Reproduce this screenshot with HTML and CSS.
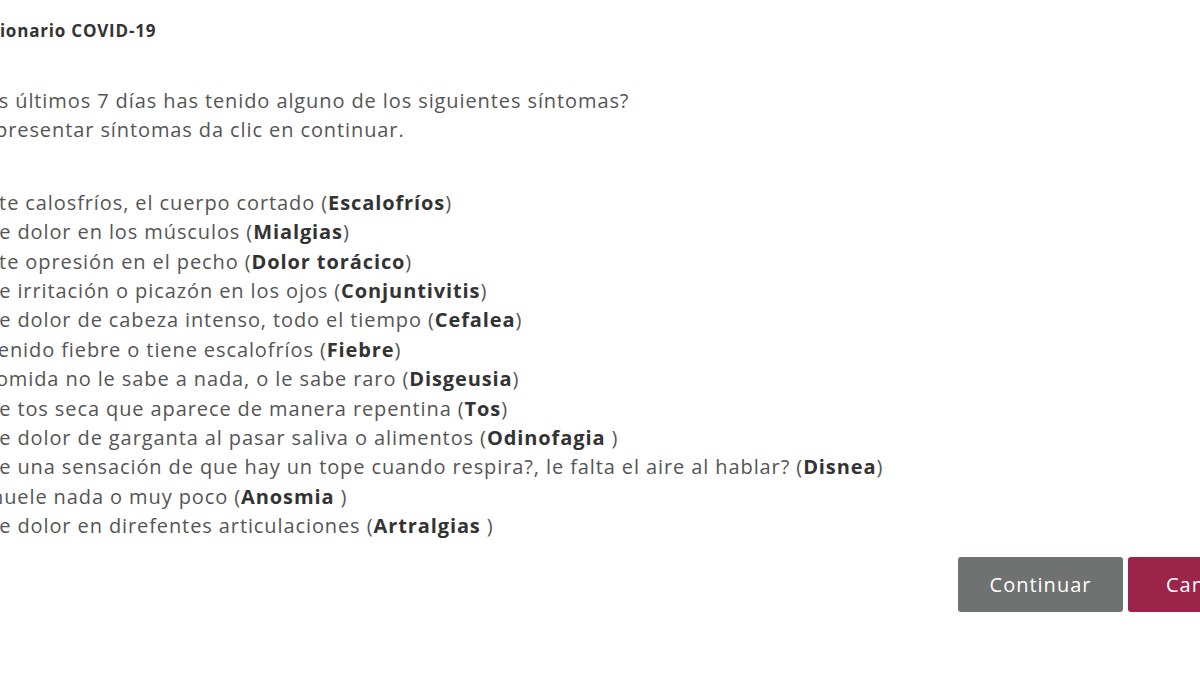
FILE: index.html
```html
<!DOCTYPE html>
<html lang="es">
<head>
  <meta charset="UTF-8">
  <meta name="viewport" content="width=device-width, initial-scale=1.0">
  <title>Cuestionario COVID-19</title>
  <link rel="stylesheet" href="styles.css">
</head>
<body>
  <div class="page">
    <h1 class="title">Cuestionario COVID-19</h1>

    <p class="question">
      ¿En los últimos 7 días has tenido alguno de los siguientes síntomas?<br>
      Si no presentar síntomas da clic en continuar.
    </p>

    <ul class="symptoms">
      <li>Siente calosfríos, el cuerpo cortado (<b>Escalofríos</b>)</li>
      <li>Tiene dolor en los músculos (<b>Mialgias</b>)</li>
      <li>Siente opresión en el pecho (<b>Dolor torácico</b>)</li>
      <li>Tiene irritación o picazón en los ojos (<b>Conjuntivitis</b>)</li>
      <li>Tiene dolor de cabeza intenso, todo el tiempo (<b>Cefalea</b>)</li>
      <li>Ha tenido fiebre o tiene escalofríos (<b>Fiebre</b>)</li>
      <li>La comida no le sabe a nada, o le sabe raro (<b>Disgeusia</b>)</li>
      <li>Tiene tos seca que aparece de manera repentina (<b>Tos</b>)</li>
      <li>Tiene dolor de garganta al pasar saliva o alimentos (<b>Odinofagia </b>)</li>
      <li>Tiene una sensación de que hay un tope cuando respira?, le falta el aire al hablar? (<b>Disnea</b>)</li>
      <li>No huele nada o muy poco (<b>Anosmia </b>)</li>
      <li>Tiene dolor en direfentes articulaciones (<b>Artralgias </b>)</li>
    </ul>

    <div class="actions">
      <button class="btn btn-gray">Continuar</button>
      <button class="btn btn-red">Cancelar</button>
    </div>
  </div>
</body>
</html>
```

FILE: styles.css
```css
body {
  margin: 0;
  overflow: hidden;
  background: #fff;
  font-family: "Open Sans", "Liberation Sans", sans-serif;
  color: #555;
  letter-spacing: 0.9px;
}

.page {
  width: 1337px;
  margin-left: -44px;
}

.title {
  margin: 21px 0 0 -8px;
  font-size: 17px;
  line-height: 20px;
  font-weight: 700;
  color: #333;
  letter-spacing: 0.8px;
}

.question {
  margin: 45px 0 0 -17px;
  font-size: 20px;
  line-height: 29.4px;
}

.symptoms {
  margin: 43px 0 0;
  padding: 0;
  list-style: none;
  font-size: 20px;
  line-height: 29.4px;
}

.symptoms b {
  color: #333;
}

.actions {
  display: flex;
  justify-content: flex-end;
  gap: 5px;
  margin-top: 16px;
}

.btn {
  width: 165px;
  height: 55px;
  border: 0;
  border-radius: 3px;
  font-family: inherit;
  font-size: 20px;
  letter-spacing: 1px;
  color: #fff;
}

.btn-gray {
  background: #6f7271;
}

.btn-red {
  background: #9d2449;
}
```
